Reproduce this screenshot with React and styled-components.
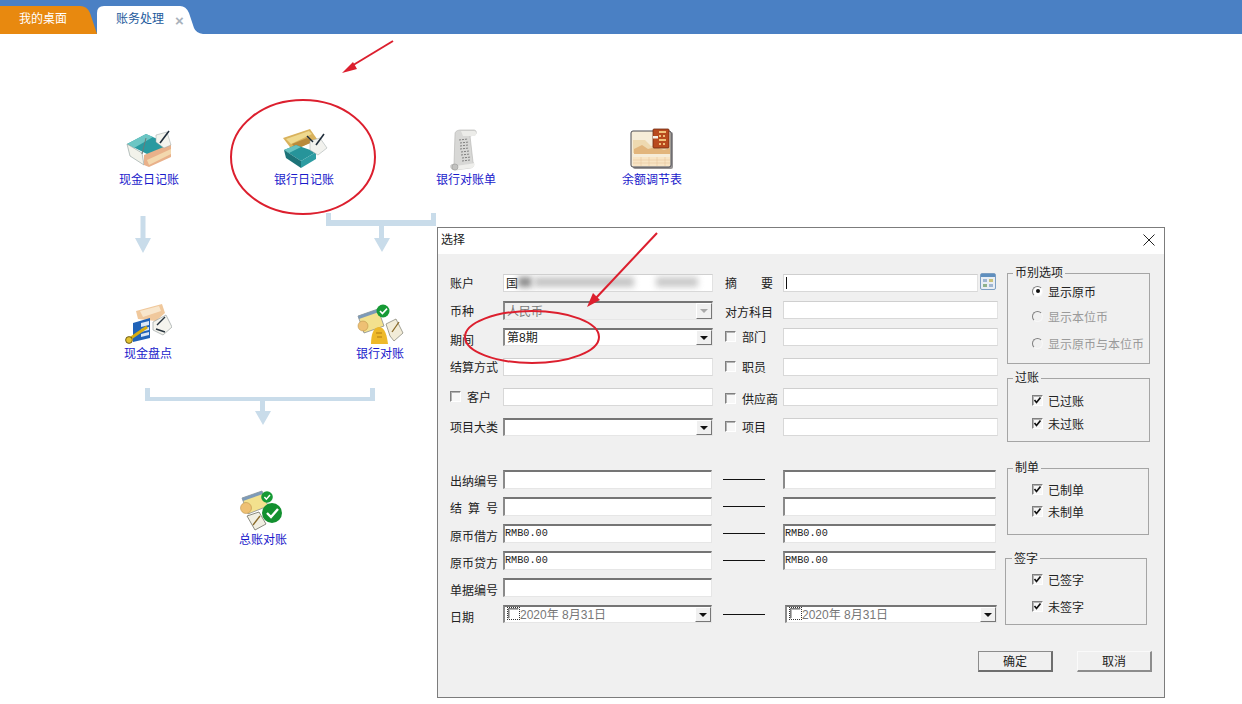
import React from 'react'
import styled, { createGlobalStyle } from 'styled-components'

const GlobalStyle = createGlobalStyle`
  html, body { margin: 0; padding: 0; background: #fff; }
  body {
    font-family: "Liberation Sans", "Noto Sans CJK SC", sans-serif;
    font-size: 12px;
    color: #222;
    overflow: hidden;
  }
  * { box-sizing: border-box; }
`

/* ---------- icons ---------- */
const CashBookIcon = () => (
  <svg width="48" height="44" viewBox="0 0 48 44">
    <path d="M2 16 21 6l25 11-20 11z" fill="#2a9aa0" />
    <path d="M2 16 21 6l7 3-19 11z" fill="#6cc6c4" />
    <path d="M2 16l15 9 2 12-14-9z" fill="#f2f2ea" stroke="#8a9a98" strokeWidth=".6" />
    <path d="M19 27l27-11v13L24 39l-5-2z" fill="#e9b18a" />
    <path d="M22 32l24-11v5L24 37z" fill="#f3d8ae" />
    <path d="M17 26 21 10" stroke="#6b7a7a" strokeWidth="1" />
    <path d="M31 7l11-3 4 13-7 3-8-6z" fill="#f4f4ee" stroke="#9aa5a5" strokeWidth=".5" />
    <path d="M35 15l9-12" stroke="#1f2c3a" strokeWidth="1.600" />
  </svg>
)

const BankBookIcon = () => (
  <svg width="48" height="44" viewBox="0 0 48 44">
    <g transform="translate(0 -2)">
      <path d="M3 12l27-9 7 10-24 12z" fill="#d9b25c" />
      <path d="M6 13l23-8 3 3-21 10z" fill="#efd98e" />
      <path d="M12 18l15-6 6 4-17 7z" fill="#b98a3c" />
      <path d="M4 24l12-5 20 7-15 9z" fill="#26949a" />
      <path d="M4 24l12-5 5 2-12 6z" fill="#67c2c0" />
      <path d="M4 24l17 11v7L6 32z" fill="#1c7378" />
      <path d="M21 35l15-9v7l-15 9z" fill="#2d9ca2" />
      <path d="M30 15l10-3 7 10-9 7-8-5z" fill="#f2f2ee" stroke="#9ca6a6" strokeWidth=".5" />
      <path d="M27 10l6 6" stroke="#1f2c3a" strokeWidth="1.400" />
      <path d="M36 19l8-11" stroke="#1f2c3a" strokeWidth="1.600" />
    </g>
  </svg>
)

const ScrollIcon = () => (
  <svg width="48" height="44" viewBox="0 0 48 44">
    <path d="M13 6c0-3 3-4 6-4h13c3 0 3 5 0 5l-4 1 3 26c2 3 0 6-3 6l-15 2c-3 0-5-2-4-5l3-1z" fill="#d8d8d6" stroke="#b2b2b0" strokeWidth=".6" />
    <path d="M19 3h13c3 0 3 5 0 5H21z" fill="#ecece9" />
    <path d="M15 38c3-1 14-2 17-3 1 3-1 5-3 5l-15 2c-2 0-2-3 1-4z" fill="#efefec" />
    <g stroke="#6a6a6a" strokeWidth=".8" strokeDasharray="2 1">
      <path d="M17 12l9-1" /><path d="M18 15l9-1" /><path d="M18 18l8-1" />
      <path d="M18 21l9-1" /><path d="M19 24l8-1" /><path d="M19 27l9-1" />
      <path d="M20 30l9-1" /><path d="M20 33l8-1" />
    </g>
    <circle cx="13" cy="39" r="3" fill="#c2c2c0" stroke="#9a9a98" strokeWidth=".6" />
  </svg>
)

const AdjustSheetIcon = () => (
  <svg width="48" height="44" viewBox="0 0 48 44">
    <rect x="5" y="4" width="40" height="37" rx="2" fill="#3f3a3c" opacity=".55" />
    <rect x="3" y="3" width="40" height="36" rx="2" fill="#f6ecd8" stroke="#4a4a52" strokeWidth="1" />
    <path d="M5 12h12l6 6 10-2 9 3v6H5z" fill="#eed9b0" />
    <path d="M6 21l8-4 6 4 8-2 8 3 6-2v6H6z" fill="#e2b57c" />
    <path d="M5 29h37v9H5z" fill="#f8e4c4" />
    <g stroke="#e8c8a0" strokeWidth=".6">
      <path d="M5 32h37" /><path d="M5 35h37" />
      <path d="M13 29v9" /><path d="M21 29v9" /><path d="M29 29v9" /><path d="M37 29v9" />
    </g>
    <rect x="25" y="1" width="16" height="19" rx="1" fill="#b84a1e" stroke="#6f2a10" strokeWidth=".8" />
    <rect x="25" y="8" width="5" height="2.500" fill="#f4f0e8" />
    <g fill="#f0c078">
      <rect x="31" y="3" width="7" height="2" /><rect x="31" y="7" width="2" height="2" /><rect x="35" y="7" width="2" height="2" />
      <rect x="31" y="11" width="7" height="2" /><rect x="31" y="15" width="2" height="2" /><rect x="35" y="15" width="2" height="2" />
    </g>
  </svg>
)

const CashCountIcon = () => (
  <svg width="48" height="44" viewBox="0 0 48 44">
    <path d="M12 9l26-7 3 9-9 8-18-2z" fill="#f0c89c" />
    <path d="M16 9l19-5 2 5-18 6z" fill="#f8e6cc" />
    <path d="M9 21l17-5v20l-17 4z" fill="#1f62b8" />
    <path d="M17 21l8-2v4l-8 2zM17 27l8-2v3l-8 2zM17 32l8-2v3l-8 2z" fill="#dbe7f6" />
    <path d="M4 38l19-13" stroke="#d8ad10" strokeWidth="3" />
    <circle cx="5" cy="38" r="3.400" fill="#e4c232" stroke="#4f4208" strokeWidth=".8" />
    <path d="M29 20l13-7 6 12-9 8-10-5z" fill="#f4f4ee" stroke="#8b9494" strokeWidth=".6" />
    <path d="M32 27l9 3M41 15l-8 8" stroke="#28343e" strokeWidth="1.400" />
  </svg>
)

const BankCheckIcon = () => (
  <svg width="48" height="44" viewBox="0 0 48 44">
    <path d="M2 14l20-7 6 17-20 7z" fill="#f3e18e" stroke="#77808a" strokeWidth=".7" />
    <path d="M2 14l20-7 1 3-20 7z" fill="#7d9ab8" />
    <circle cx="7" cy="24" r="5" fill="#eec074" stroke="#b58a3e" strokeWidth=".5" />
    <path d="M15 42c0-8 2-17 8-17s8 9 9 17z" fill="#eeb92a" />
    <path d="M20 31h6M21 35h5" stroke="#b17a10" strokeWidth="1" />
    <path d="M30 22l10-5 7 14-9 8-4-5z" fill="#f2ecd8" stroke="#7d7d70" strokeWidth=".7" />
    <path d="M36 30l7-10" stroke="#8a6a28" strokeWidth="1.300" />
    <circle cx="27" cy="9" r="6.500" fill="#169a35" />
    <path d="M24 9l2.400 2.600L31 6.600" fill="none" stroke="#fff" strokeWidth="1.600" />
  </svg>
)

const LedgerCheckIcon = () => (
  <svg width="48" height="44" viewBox="0 0 48 44">
    <path d="M3 10l20-7 6 15-20 8z" fill="#f3e18e" stroke="#77808a" strokeWidth=".7" />
    <path d="M3 10l20-7 1 3-20 7z" fill="#7d9ab8" />
    <circle cx="7" cy="20" r="5.500" fill="#eec074" stroke="#b58a3e" strokeWidth=".5" />
    <path d="M8 28l12-4 7 12-11 6z" fill="#f1efe2" stroke="#6e6e62" strokeWidth=".8" />
    <path d="M14 37l7-9" stroke="#8a6a28" strokeWidth="1.300" />
    <circle cx="28" cy="9" r="5.800" fill="#169a35" />
    <path d="M25.400 9l2 2.200 3.600-4.200" fill="none" stroke="#fff" strokeWidth="1.500" />
    <circle cx="33" cy="25" r="10" fill="#12902f" />
    <path d="M28 25l4 4 7-8" fill="none" stroke="#fff" strokeWidth="2.400" />
  </svg>
)

const CalendarIcon = () => (
  <svg width="16" height="17" viewBox="0 0 16 17">
    <rect x=".5" y=".5" width="15" height="16" rx="1.500" fill="#e9eef4" stroke="#7d9fc2" />
    <rect x="1" y="1" width="14" height="3" fill="#5f8fbe" />
    <rect x="3" y="6" width="4" height="3" fill="#9fb6d2" />
    <rect x="9" y="6" width="4" height="3" fill="#c9c27a" />
    <rect x="3" y="11" width="4" height="3" fill="#8fb28c" />
    <rect x="9" y="11" width="4" height="3" fill="#9fb6d2" />
  </svg>
)

/* ---------- tabs ---------- */
const TabBar = styled.div`
  height: 34px;
  background: #4a80c4;
  display: flex;
  align-items: flex-end;
`
const HomeTab = styled.div`
  width: 97px;
  height: 28px;
  padding-left: 19px;
  background: #e8890f;
  color: #fff;
  line-height: 27px;
  clip-path: path('M0 0 L80 0 Q87 0 90 7 L97 28 L0 28 Z');
`
const ActiveTab = styled.div`
  width: 106px;
  height: 28px;
  padding-left: 19px;
  background: #fff;
  color: #1c5a9c;
  line-height: 27px;
  display: flex;
  clip-path: path('M0 28 L0 7 Q0 0 7 0 L83 0 Q89 0 92 7 L97 22 Q99 27 106 28 Z');
`
const TabClose = styled.span`
  margin-left: 11px;
  color: #a9b2bb;
  font-size: 15px;
  font-weight: 700;
  line-height: 29px;
`

/* ---------- flow canvas ---------- */
const Canvas = styled.main`
  position: relative;
  height: 670px;
`
const Node = styled.a`
  position: absolute;
  left: ${p => p.$cx - 50}px;
  top: ${p => p.$top}px;
  width: 100px;
  display: flex;
  flex-direction: column;
  align-items: center;
  color: #1a1acb;
  line-height: 14px;
  svg { display: block; margin-bottom: 1px; filter: blur(.35px); }
`
const Flow = styled.svg`
  position: absolute;
  left: ${p => p.$x}px;
  top: ${p => p.$y}px;
  path { fill: #c9dcea; }
`
const Annotations = styled.svg`
  position: absolute;
  left: 0;
  top: -34px;
  z-index: 5;
  pointer-events: none;
  ellipse, line { fill: none; stroke: #dc1f2e; stroke-width: 2; }
  path { fill: #dc1f2e; }
`

/* ---------- dialog ---------- */
const Dialog = styled.section`
  position: absolute;
  left: 437px;
  top: 193px;
  width: 728px;
  height: 471px;
  border: 1px solid #7c7c7c;
  background: #f0f0f0;
`
const TitleBar = styled.header`
  height: 26px;
  padding: 0 9px 6px 3px;
  background: #fff;
  display: flex;
  align-items: center;
  justify-content: space-between;
  font-size: 12px;
  svg { margin-top: 4px; }
`
const DialogBody = styled.div`
  padding: 19px 0 0 12px;
`
const Main = styled.div`
  display: flex;
`
const FormColumn = styled.div`
  width: 548px;
  padding-top: 1px;
`
const TopGrid = styled.div`
  display: grid;
  grid-template-columns: 53px 210px 70px 215px;
  grid-template-rows: 27px 27px 30px 30px 30px 30px;
`
const RangeGrid = styled.div`
  margin-top: 22px;
  display: grid;
  grid-template-columns: 53px 209px 71px 213px;
  grid-auto-rows: 27px;
`
const Label = styled.label`
  display: flex;
  align-items: center;
  gap: 6px;
  height: 18px;
  padding-bottom: 2px;
  white-space: nowrap;
  margin-top: ${p => p.$drop || 0}px;
  padding-left: ${p => p.$inset || 0}px;
`
const Spread = styled.span`
  display: block;
  width: 48px;
  text-align-last: justify;
`
const Field = styled.div`
  height: ${p => p.$h || 18}px;
  margin-left: ${p => p.$shift || 0}px;
  margin-right: ${p => -(p.$stretch || 0)}px;
  background: ${p => (p.$disabled ? '#f0f0f0' : '#fff')};
  display: flex;
  align-items: center;
  justify-content: space-between;
  padding-left: 2px;
  overflow: hidden;
  color: ${p => (p.$disabled || p.$muted ? '#777' : '#222')};
  border-style: solid;
  border-width: ${p => (p.$sunken ? '2px 1px 1px 2px' : '1px')};
  border-color: ${p => (p.$sunken ? '#757575 #e6e6e6 #e6e6e6 #8a8a8a' : '#cfcfcf #e2e2e2 #d8d8d8 #d8d8d8')};
`
const DropButton = styled.span`
  flex: none;
  width: 16px;
  height: 100%;
  background: #f0f0f0;
  border-right: 1px solid #777;
  border-bottom: 1px solid #777;
  border-top: 1px solid #fff;
  border-left: 1px solid #fff;
  display: flex;
  align-items: center;
  justify-content: center;
  &::after {
    content: '';
    border-style: solid;
    border-width: 4px 4px 0;
    border-color: ${p => (p.$disabled ? '#a8a8a8' : '#111')} transparent transparent;
  }
`
const FieldText = styled.span`
  display: flex;
  align-items: center;
  flex: 1;
  height: 100%;
  padding-bottom: 2px;
`
const Money = styled(FieldText)`
  margin-left: -2px;
  font-family: "Liberation Mono", monospace;
  font-size: 10.200px;
  color: #222;
`
const Caret = styled.span`
  width: 1px;
  height: 12px;
  background: #111;
`
const Smudge = styled.i`
  display: block;
  flex: none;
  width: ${p => p.$w}px;
  height: 10px;
  margin-left: ${p => p.$gap || 0}px;
  background: ${p => p.$c || '#a8a8a8'};
  filter: blur(3px);
`
const WithButton = styled.div`
  display: flex;
  align-items: flex-start;
  gap: 2px;
  height: 18px;
  svg { flex: none; margin-top: -1px; margin-right: 2px; }
`
const GrowField = styled(Field)`
  flex: 1;
`
const Check = styled.span`
  flex: none;
  width: 11px;
  height: 11px;
  background: #f7f7f7;
  border-style: solid;
  border-width: 1px;
  border-color: #7f7f7f #fff #fff #7f7f7f;
  box-shadow: inset 1px 1px 0 #b4b4b4;
  display: flex;
  svg { display: block; }
`
const DateCheck = styled(Check)`
  background: #fff;
  margin: 0 1px 0 1px;
  outline: 1px dotted #333;
`
const Dash = styled.span`
  display: block;
  width: 42px;
  height: 1px;
  margin: 9px 0 0 11px;
  background: #111;
`
const SideColumn = styled.aside`
  width: 143px;
  margin-left: 9px;
  display: flex;
  flex-direction: column;
`
const GroupBox = styled.fieldset`
  position: relative;
  margin: ${p => p.$mt || 0}px 0 0 ${p => p.$ml || 0}px;
  padding: ${p => p.$top}px 0 0 ${p => p.$left || 24}px;
  width: ${p => p.$w || 143}px;
  height: ${p => p.$h}px;
  min-width: 0;
  border: 1px solid #a5a5a5;
  display: flex;
  flex-direction: column;
  gap: ${p => p.$gap}px;
`
const GroupTitle = styled.span`
  position: absolute;
  left: ${p => p.$left || 5}px;
  top: ${p => p.$top || -8}px;
  padding: 0 2px;
  background: #f0f0f0;
  line-height: 14px;
`
const Option = styled.label`
  height: 18px;
  display: flex;
  align-items: center;
  gap: 5px;
  margin-top: ${p => p.$mt || 0}px;
  color: ${p => (p.$disabled ? '#9a9a9a' : '#222')};
`
const Radio = styled.span`
  flex: none;
  width: 11px;
  height: 11px;
  border-radius: 50%;
  border: 1px solid;
  border-color: #7f7f7f #f7f7f7 #f7f7f7 #7f7f7f;
  background: ${p => (p.$disabled ? 'transparent' : '#fff')};
  display: flex;
  align-items: center;
  justify-content: center;
  &::after {
    content: '';
    display: ${p => (p.$on ? 'block' : 'none')};
    width: 4px;
    height: 4px;
    border-radius: 50%;
    background: #111;
  }
`
const Footer = styled.footer`
  margin-top: 19px;
  padding-right: 12px;
  display: flex;
  justify-content: flex-end;
  gap: 24px;
`
const Button = styled.button`
  width: 75px;
  height: 21px;
  padding: 0 0 2px;
  font: inherit;
  color: #222;
  background: #f0f0f0;
  border-style: solid;
  border-width: 1px 2px 2px 1px;
  border-color: ${p => (p.$primary ? '#8c8c8c #6e6e6e #6e6e6e #8c8c8c' : '#fafafa #8c8c8c #8c8c8c #fafafa')};
`

const Tick = () => (
  <svg width="9" height="9" viewBox="0 0 9 9">
    <path d="M1.500 4l2 2.500L7.500 1.500" fill="none" stroke="#111" strokeWidth="1.700" />
  </svg>
)

const Checked = ({ children }) => (
  <Option><Check><Tick /></Check>{children}</Option>
)

const nodes = [
  { cx: 149, top: 128, label: '现金日记账', icon: <CashBookIcon /> },
  { cx: 304, top: 128, label: '银行日记账', icon: <BankBookIcon /> },
  { cx: 466, top: 128, label: '银行对账单', icon: <ScrollIcon /> },
  { cx: 652, top: 128, label: '余额调节表', icon: <AdjustSheetIcon /> },
  { cx: 148, top: 302, label: '现金盘点', icon: <CashCountIcon /> },
  { cx: 380, top: 302, label: '银行对账', icon: <BankCheckIcon /> },
  { cx: 263, top: 488, label: '总账对账', icon: <LedgerCheckIcon /> },
]

const App = () => (
  <>
    <GlobalStyle />
    <TabBar>
      <HomeTab>我的桌面</HomeTab>
      <ActiveTab>账务处理<TabClose>×</TabClose></ActiveTab>
    </TabBar>
    <Canvas>
      {nodes.map(n => (
        <Node key={n.label} $cx={n.cx} $top={n.top - 34}>
          {n.icon}
          {n.label}
        </Node>
      ))}

      <Flow $x={135} $y={182} width="16" height="38">
        <path d="M5.500 0h5v22H16l-8 15-8-15h5.500z" />
      </Flow>
      <Flow $x={326} $y={179} width="110" height="40">
        <path d="M0 0h5v7h100V0h5v13H58v12h6l-8 14-8-14h5V13H0z" />
      </Flow>
      <Flow $x={145} $y={354} width="230" height="38">
        <path d="M0 0h5v9h220V0h5v13H120v10h6l-8 14-8-14h5V13H0z" />
      </Flow>

      <Dialog>
        <TitleBar>
          选择
          <svg width="12" height="12" viewBox="0 0 12 12">
            <path d="M.5.500l11 11M11.500.500l-11 11" stroke="#222" strokeWidth="1" />
          </svg>
        </TitleBar>
        <DialogBody>
          <Main>
            <FormColumn>
              <TopGrid>
                <Label>账户</Label>
                <Field>
                  <FieldText>
                    国
                    <Smudge $w={14} $c="#8a8a8a" />
                    <Smudge $w={100} $gap={2} $c="#c4c4c4" />
                    <Smudge $w={42} $gap={22} $c="#c9c9c9" />
                  </FieldText>
                </Field>
                <Label $inset={12}><Spread>摘 要</Spread></Label>
                <WithButton>
                  <GrowField><Caret /></GrowField>
                  <CalendarIcon />
                </WithButton>

                <Label $drop={1}>币种</Label>
                <Field $sunken $disabled $h={19}><FieldText>人民币</FieldText><DropButton $disabled /></Field>
                <Label $inset={12} $drop={2}>对方科目</Label>
                <Field />

                <Label $drop={3}>期间</Label>
                <Field $sunken><FieldText>第8期</FieldText><DropButton /></Field>
                <Label $inset={12}><Check />部门</Label>
                <Field />

                <Label>结算方式</Label>
                <Field />
                <Label $inset={12}><Check />职员</Label>
                <Field />

                <Label><Check />客户</Label>
                <Field />
                <Label $inset={12} $drop={2}><Check />供应商</Label>
                <Field />

                <Label>项目大类</Label>
                <Field $sunken><span /><DropButton /></Field>
                <Label $inset={12}><Check />项目</Label>
                <Field />
              </TopGrid>

              <RangeGrid>
                <Label $drop={2}>出纳编号</Label>
                <Field $sunken $h={19} />
                <Dash />
                <Field $sunken $h={19} />

                <Label $drop={2}><Spread>结 算 号</Spread></Label>
                <Field $sunken $h={19} />
                <Dash />
                <Field $sunken $h={19} />

                <Label $drop={3}>原币借方</Label>
                <Field $sunken $h={19}><Money>RMB0.00</Money></Field>
                <Dash />
                <Field $sunken $h={19}><Money>RMB0.00</Money></Field>

                <Label $drop={3}>原币贷方</Label>
                <Field $sunken $h={19}><Money>RMB0.00</Money></Field>
                <Dash />
                <Field $sunken $h={19}><Money>RMB0.00</Money></Field>

                <Label $drop={3}>单据编号</Label>
                <Field $sunken $h={19} />
                <span />
                <span />

                <Label $drop={3}>日期</Label>
                <Field $sunken $muted $h={18}>
                  <FieldText><DateCheck />2020年 8月31日</FieldText>
                  <DropButton />
                </Field>
                <Dash />
                <Field $sunken $muted $h={18} $shift={2} $stretch={1}>
                  <FieldText><DateCheck />2020年 8月31日</FieldText>
                  <DropButton />
                </Field>
              </RangeGrid>
            </FormColumn>

            <SideColumn>
              <GroupBox $h={91} $top={8} $gap={7}>
                <GroupTitle>币别选项</GroupTitle>
                <Option><Radio $on />显示原币</Option>
                <Option $disabled><Radio $disabled />显示本位币</Option>
                <Option $disabled $mt={2}><Radio $disabled />显示原币与本位币</Option>
              </GroupBox>
              <GroupBox $h={64} $mt={14} $top={12} $gap={5}>
                <GroupTitle>过账</GroupTitle>
                <Checked>已过账</Checked>
                <Checked>未过账</Checked>
              </GroupBox>
              <GroupBox $h={67} $mt={26} $w={142} $top={11} $gap={4}>
                <GroupTitle>制单</GroupTitle>
                <Checked>已制单</Checked>
                <Checked>未制单</Checked>
              </GroupBox>
              <GroupBox $h={67} $mt={23} $ml={-2} $w={142} $left={26} $top={11} $gap={9}>
                <GroupTitle $left={6} $top={-7}>签字</GroupTitle>
                <Checked>已签字</Checked>
                <Checked>未签字</Checked>
              </GroupBox>
            </SideColumn>
          </Main>
          <Footer>
            <Button $primary>确定</Button>
            <Button>取消</Button>
          </Footer>
        </DialogBody>
      </Dialog>

      <Annotations width="1242" height="704">
        <ellipse cx="303" cy="157" rx="72" ry="57" />
        <ellipse cx="532" cy="337" rx="67" ry="26" />
        <line x1="393" y1="41" x2="350" y2="67" />
        <path d="M342 73l11-11 4 7z" />
        <line x1="657" y1="233" x2="596" y2="298" />
        <path d="M587 307l6-14 7 7z" />
      </Annotations>
    </Canvas>
  </>
)

export default App
